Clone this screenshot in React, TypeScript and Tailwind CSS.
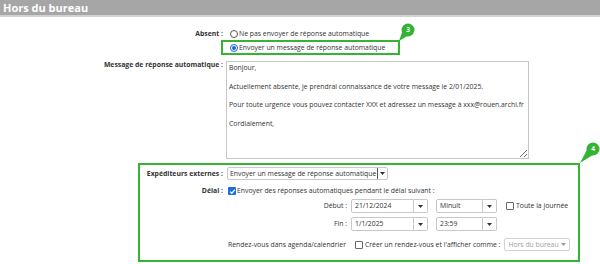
import React from "react";

function Radio({ checked = false }: { checked?: boolean }) {
  return checked ? (
    <span className="w-[8px] h-[8px] rounded-full border border-[#1466d6] bg-white flex items-center justify-center shrink-0">
      <span className="block w-[4px] h-[4px] rounded-full bg-[#1466d6]" />
    </span>
  ) : (
    <span className="block w-[8px] h-[8px] rounded-full border border-[#555] bg-white shrink-0" />
  );
}

function Check({ checked = false }: { checked?: boolean }) {
  return checked ? (
    <span className="w-[8px] h-[8px] rounded-[1px] bg-[#1a6fe0] flex items-center justify-center shrink-0">
      <svg width="7" height="7" viewBox="0 0 8 8">
        <path d="M1.3 4.2 L3.2 6 L6.8 1.8" stroke="white" strokeWidth="1.4" fill="none" />
      </svg>
    </span>
  ) : (
    <span className="block w-[8px] h-[8px] rounded-[1px] border border-[#666] bg-white shrink-0" />
  );
}

function Tri({ color = "#333" }: { color?: string }) {
  return (
    <svg width="5" height="3" viewBox="0 0 5 3">
      <path d="M0 0 H5 L2.5 3 Z" fill={color} />
    </svg>
  );
}

function Combo({ value, w }: { value: string; w: string }) {
  return (
    <div className="flex h-[14px]">
      <div className={`${w} h-[14px] border border-[#c8c8c8] rounded-l-[2px] flex items-center pl-[3px] bg-white whitespace-nowrap`}>{value}</div>
      <div className="w-[14px] h-[14px] border border-l-0 border-[#c8c8c8] rounded-r-[2px] flex items-center justify-center bg-white">
        <Tri />
      </div>
    </div>
  );
}

export default function App() {
  const msg =
    "Bonjour,\n\nActuellement absente, je prendrai connaissance de votre message le 2/01/2025.\n\nPour toute urgence vous pouvez contacter XXX et adressez un message à xxx@rouen.archi.fr\n\nCordialement,";
  return (
    <div className="relative w-[600px] h-[264px] bg-white overflow-hidden font-['Open_Sans',sans-serif] text-[6.85px] leading-[10px] text-[#333] whitespace-nowrap">
      <div className="h-[17px] bg-[#a6a6a6] border-b-2 border-[#d2d2d2] flex items-center pl-[3px] text-white font-bold text-[11px]">
        Hors du bureau
      </div>

      <div className="flex items-center h-[12px] mt-[11px]">
        <div className="w-[223px] text-right font-bold">Absent :</div>
        <div className="flex items-center ml-[7px]">
          <Radio />
          <span className="ml-[1px]">Ne pas envoyer de réponse automatique</span>
        </div>
      </div>

      <div className="ml-[221px] w-[179px] h-[15px] border-2 border-[#35b335] flex items-center pl-[7px]">
        <Radio checked />
        <span className="ml-[1px]">Envoyer un message de réponse automatique</span>
      </div>

      <div className="flex items-start mt-[6px]">
        <div className="w-[223px] text-right font-bold -mt-[1px]">Message de réponse automatique :</div>
        <textarea
          readOnly
          wrap="off"
          value={msg}
          className="ml-[3px] w-[303px] h-[98px] border border-[#c6c6c6] pl-[2px] pr-0 pt-[1px] text-[6.85px] leading-[9.33px] text-[#333] font-['Open_Sans',sans-serif] outline-none bg-white overflow-hidden whitespace-pre"
        />
      </div>

      <div className="ml-[138px] w-[442px] h-[99px] mt-[4px] border-2 border-[#35b335]">
        <div className="flex items-center mt-[2px] h-[13px]">
          <div className="w-[83px] text-right font-bold">Expéditeurs externes :</div>
          <div className="ml-[4px] w-[161px] h-[13px] border border-[#c8c8c8] rounded-[2px] flex items-center overflow-hidden">
            <span className="flex-1 pl-[2px]">Envoyer un message de réponse automatique</span>
            <span className="w-[10px] h-full border-l border-[#555] flex items-center justify-center shrink-0">
              <Tri />
            </span>
          </div>
        </div>

        <div className="flex items-center mt-[6px] h-[10px]">
          <div className="w-[83px] text-right font-bold">Délai :</div>
          <span className="ml-[5px]">
            <Check checked />
          </span>
          <span className="ml-[1px]">Envoyer des réponses automatiques pendant le délai suivant :</span>
        </div>

        <div className="flex items-center mt-[3px] h-[14px]">
          <div className="w-[87px]" />
          <div className="w-[120px] text-right">Début :</div>
          <div className="ml-[4px]">
            <Combo value="21/12/2024" w="w-[63px]" />
          </div>
          <div className="ml-[8px]">
            <Combo value="Minuit" w="w-[47px]" />
          </div>
          <span className="ml-[9px]">
            <Check />
          </span>
          <span className="ml-[2px]">Toute la journée</span>
        </div>

        <div className="flex items-center mt-[4px] h-[14px]">
          <div className="w-[87px]" />
          <div className="w-[120px] text-right">Fin :</div>
          <div className="ml-[4px]">
            <Combo value="1/1/2025" w="w-[63px]" />
          </div>
          <div className="ml-[8px]">
            <Combo value="23:59" w="w-[47px]" />
          </div>
        </div>

        <div className="flex items-center mt-[7px] h-[13px]">
          <div className="w-[88px]" />
          <div className="w-[127px]">Rendez-vous dans agenda/calendrier</div>
          <Check />
          <span className="ml-[2px]">Créer un rendez-vous et l'afficher comme :</span>
          <div className="ml-[4px] w-[66px] h-[13px] border border-[#d3d3d3] rounded-[2px] flex items-center justify-between pl-[3px] pr-[3px] text-[#a0a0a0]">
            <span>Hors du bureau</span>
            <Tri color="#9a9a9a" />
          </div>
        </div>
      </div>

      <svg className="absolute left-[396px] top-[22px]" width="20" height="22" viewBox="0 0 20 22">
        <path d="M3 19 L16 11.3 L8 4.7 Z" fill="#35b335" />
        <circle cx="12" cy="8" r="6.5" fill="#35b335" />
        <text x="12" y="10.3" fontSize="6.5" fontWeight="bold" fill="white" textAnchor="middle" fontFamily="Open Sans, sans-serif">3</text>
      </svg>
      <svg className="absolute left-[577px] top-[140px]" width="24" height="26" viewBox="0 0 24 26">
        <path d="M3 23 L19.8 12.5 L12.2 5.5 Z" fill="#35b335" />
        <circle cx="16" cy="9" r="6.5" fill="#35b335" />
        <text x="16" y="11.3" fontSize="6.5" fontWeight="bold" fill="white" textAnchor="middle" fontFamily="Open Sans, sans-serif">4</text>
      </svg>
    </div>
  );
}
